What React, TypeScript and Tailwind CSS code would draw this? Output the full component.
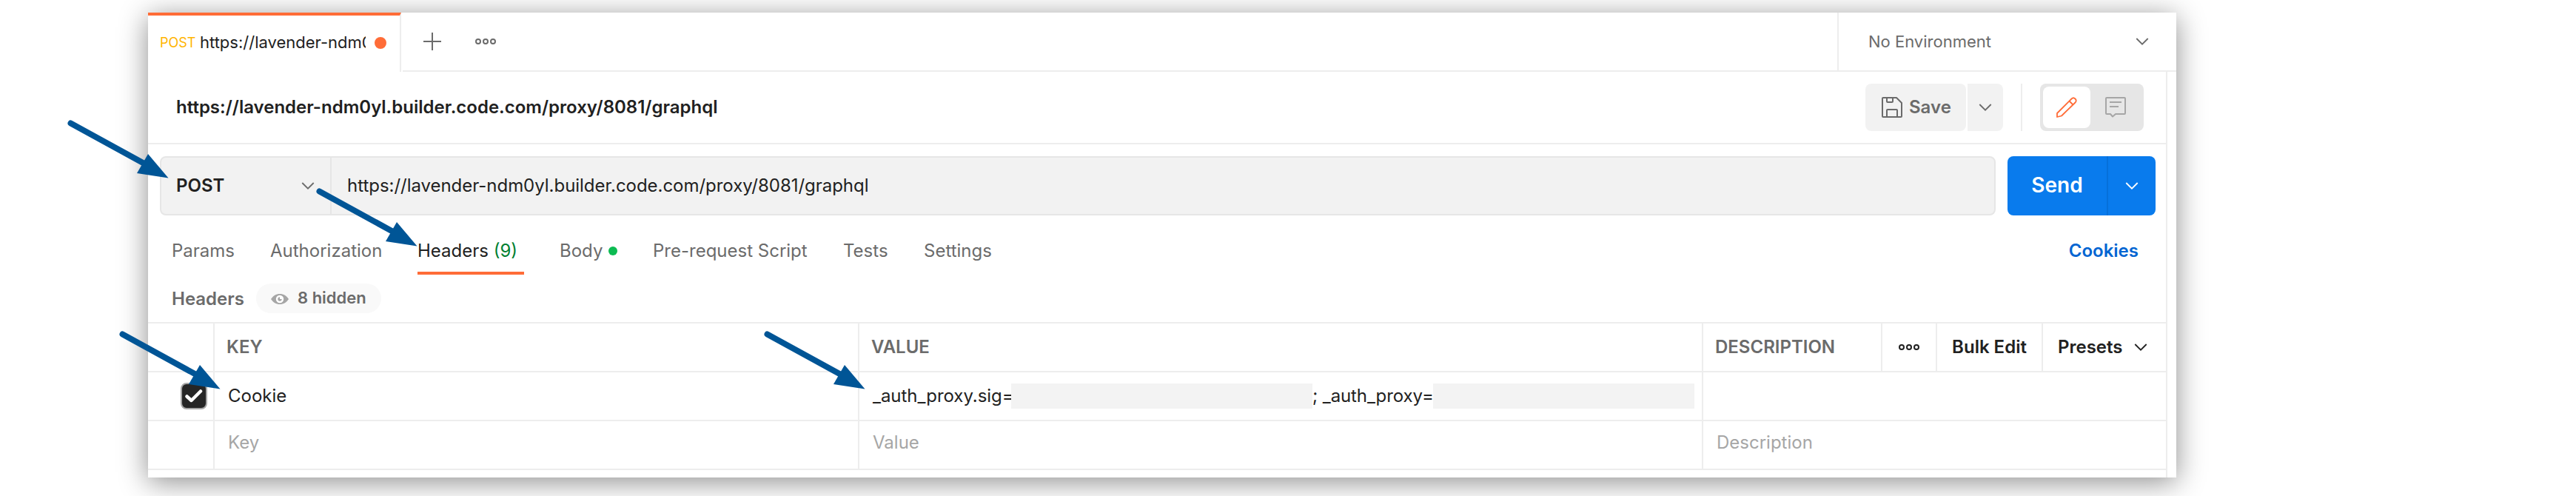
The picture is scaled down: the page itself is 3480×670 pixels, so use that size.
import React from "react";

function Chevron({ className = "" }: { className?: string }) {
  return (
    <svg viewBox="0 0 20 12" className={`h-3 w-5 shrink-0 ${className}`} fill="none" stroke="currentColor" strokeWidth="1.8">
      <path d="M2.300 2 10 9.700 17.700 2" />
    </svg>
  );
}

function Dots({ className = "" }: { className?: string }) {
  return (
    <svg viewBox="0 0 28 10" className={`h-2.5 w-7 shrink-0 ${className}`} fill="none" stroke="currentColor" strokeWidth="2">
      <circle cx="4" cy="5" r="3" />
      <circle cx="14" cy="5" r="3" />
      <circle cx="24" cy="5" r="3" />
    </svg>
  );
}

function Arrow({ className }: { className: string }) {
  return (
    <svg viewBox="0 0 138 80" className={`absolute h-[80px] w-[138px] text-[#005596] ${className}`}>
      <path d="M4.500 4.500 104 59" stroke="currentColor" strokeWidth="8" strokeLinecap="round" />
      <path d="M136.500 78.500 109 46 94 72Z" fill="currentColor" />
    </svg>
  );
}

function Cell({ children, className = "" }: { children?: React.ReactNode; className?: string }) {
  return <div className={`flex items-center whitespace-nowrap ${className}`}>{children}</div>;
}

export default function App() {
  return (
    <div className="relative h-[670px] w-[3480px] overflow-hidden bg-white pl-[200px] pt-[17px] font-['Inter',sans-serif] text-2xl text-[#212121]">
      <div className="flex h-[628px] w-[2740px] flex-col bg-white shadow-[0_6px_36px_rgba(0,0,0,0.45)]">
        <div className="flex h-20 shrink-0">
          <div className="flex w-[342px] items-center border-r-2 border-t-4 border-r-[#ededed] border-t-[#ff6c37] pb-0.5 pl-4 whitespace-nowrap">
            <span className="w-[54px] text-lg text-[#ffb400]">POST</span>
            <span className="w-[224px] overflow-hidden text-[22px]">https://lavender-ndm0yl</span>
            <span className="ml-3 size-4 rounded-full bg-[#ff6c37]" />
          </div>
          <div className="ml-0.5 flex grow items-center border-b-2 border-[#ededed] pl-7 text-[#6b6b6b]">
            <svg viewBox="0 0 24 24" className="size-6" stroke="currentColor" strokeWidth="2">
              <path d="M12 0v24M0 12h24" />
            </svg>
            <Dots className="ml-[46px]" />
          </div>
          <div className="flex w-[458px] items-center justify-between border-b-2 border-l-2 border-[#ededed] pl-10 pr-9 text-[22px] text-[#6b6b6b]">
            <span className="pt-0.5">No Environment</span>
            <Chevron />
          </div>
        </div>
        <div className="flex grow">
          <div className="flex w-[2728px] flex-col border-r-2 border-[#ededed]">
            <div className="flex h-[98px] items-center border-b-2 border-[#ededed] pl-[38px] pr-[30px]">
              <span className="grow font-semibold">https://lavender-ndm0yl.builder.code.com/proxy/8081/graphql</span>
              <div className="flex h-16 gap-0.5 font-semibold text-[#6b6b6b]">
                <div className="flex w-[136px] items-center rounded-lg bg-[#f2f2f2] pl-[22px]">
                  <svg viewBox="0 0 28 28" className="size-7" fill="none" stroke="currentColor" strokeWidth="2" strokeLinejoin="round">
                    <path d="M2 1h18l7 7v18a1 1 0 0 1-1 1H2a1 1 0 0 1-1-1V2a1 1 0 0 1 1-1zM7 1v5a1 1 0 0 0 1 1h6a1 1 0 0 0 1-1V1M7 27V18a1 1 0 0 1 1-1h12a1 1 0 0 1 1 1v9" />
                  </svg>
                  <span className="ml-[9px]">Save</span>
                </div>
                <div className="flex w-12 items-center justify-center rounded-r-lg bg-[#f2f2f2]">
                  <Chevron />
                </div>
              </div>
              <div className="ml-6 h-16 w-0.5 bg-[#ededed]" />
              <div className="ml-6 flex h-16 w-[140px] rounded-lg bg-[#e6e6e6] p-1">
                <div className="flex w-16 items-center justify-center rounded-lg bg-white text-[#ff6c37]">
                  <svg viewBox="0 0 28 28" className="size-7" fill="none" stroke="currentColor" strokeWidth="1.8" strokeLinejoin="round">
                    <path d="M1 27V22L20.500 2.500Q23 0 25.500 2.500Q28 5 25.500 7.500L7 25.500ZM17.500 5.500 22.500 10.500" />
                  </svg>
                </div>
                <div className="flex grow items-center justify-center text-[#a6a6a6]">
                  <svg viewBox="0 0 28 28" className="size-7" fill="none" stroke="currentColor" strokeWidth="2" strokeLinejoin="round">
                    <path d="M2 1h24a1 1 0 0 1 1 1v20a1 1 0 0 1-1 1H14l-4 3.500L7 23H2a1 1 0 0 1-1-1V2a1 1 0 0 1 1-1zM6 7h16M6 13h12" />
                  </svg>
                </div>
              </div>
            </div>
            <div className="flex h-28 shrink-0 items-center gap-4 pl-4 pr-3.5">
              <div className="flex h-20 grow rounded-lg border-2 border-[#e6e6e6] bg-[#f2f2f2]">
                <div className="flex w-[230px] items-center justify-between border-r-2 border-[#e6e6e6] px-5">
                  <span className="font-semibold">POST</span>
                  <Chevron className="text-[#6b6b6b]" />
                </div>
                <span className="self-center pl-[21px] tracking-[-0.03px]">https://lavender-ndm0yl.builder.code.com/proxy/8081/graphql</span>
              </div>
              <div className="flex h-20 w-[200px] rounded-lg bg-[#097bed] font-semibold text-white">
                <div className="flex w-[136px] items-center justify-center border-r-2 border-[#0670da] text-[28px]">Send</div>
                <div className="flex grow items-center justify-center">
                  <Chevron />
                </div>
              </div>
            </div>
            <div className="flex h-16 items-stretch pl-8 pr-[37px] leading-[64px] whitespace-nowrap text-[#6b6b6b]">
              <span className="w-[133px]">Params</span>
              <span className="w-[199px]">Authorization</span>
              <span className="w-36 border-b-4 border-[#ff6c37] text-[#212121]">
                Headers <span className="text-[#007f31]">(9)</span>
              </span>
              <span className="ml-12 flex w-[126px] items-center">
                Body <span className="ml-2 size-3 rounded-full bg-[#0cbb52]" />
              </span>
              <span className="w-[257px]">Pre-request Script</span>
              <span className="w-[109px]">Tests</span>
              <span className="grow">Settings</span>
              <span className="font-semibold text-[#0265d2]">Cookies</span>
            </div>
            <div className="flex h-16 items-center pl-8 font-semibold text-[#6b6b6b]">
              <span className="w-[114px] pt-0.5">Headers</span>
              <div className="flex h-10 w-[169px] items-center rounded-[20px] bg-[#f9f9f9] pl-5 text-[22px]">
                <svg viewBox="0 0 24 14" className="mt-0.5 h-3.5 w-6 text-[#a6a6a6]" fill="currentColor">
                  <path d="M0 7C3 2.500 7 0 12 0s9 2.500 12 7c-3 4.500-7 7-12 7S3 11.500 0 7z" />
                  <circle cx="12" cy="7" r="5.200" fill="white" />
                  <circle cx="12" cy="7" r="2.700" />
                  <path d="M12 3.500h3V7h-3z" fill="white" />
                </svg>
                <span className="ml-3">8 hidden</span>
              </div>
            </div>
            <div className="grid h-[200px] shrink-0 grid-cols-[90px_871px_1140px_1fr] grid-rows-[66px_66px_66px] border-t-2 border-[#ededed]">
              <Cell className="border-b-2 border-r-2 border-[#ededed]" />
              <Cell className="border-b-2 border-r-2 border-[#ededed] pl-4 font-semibold text-[#6b6b6b]">KEY</Cell>
              <Cell className="border-b-2 border-r-2 border-[#ededed] pl-4 font-semibold text-[#6b6b6b]">VALUE</Cell>
              <div className="flex border-b-2 border-[#ededed] font-semibold">
                <Cell className="w-[242px] border-r-2 border-[#ededed] pl-4 text-[#6b6b6b]">DESCRIPTION</Cell>
                <Cell className="w-[74px] justify-center border-r-2 border-[#ededed]"><Dots /></Cell>
                <Cell className="w-[143px] justify-center border-r-2 border-[#ededed]">Bulk Edit</Cell>
                <Cell className="pl-5">Presets <Chevron className="ml-3.5" /></Cell>
              </div>
              <Cell className="border-b-2 border-r-2 border-[#ededed] pl-11">
                <div className="flex h-9 w-9 items-center justify-center rounded-lg border-2 border-[#a6a6a6] bg-[#262626]">
                  <svg viewBox="0 0 24 20" className="h-5 w-6" fill="none" stroke="white" strokeWidth="4.500" strokeLinecap="round" strokeLinejoin="round">
                    <path d="M2.500 10.500 8.500 16 21 3.500" />
                  </svg>
                </div>
              </Cell>
              <Cell className="border-b-2 border-r-2 border-[#ededed] pl-[18px]">Cookie</Cell>
              <Cell className="border-b-2 border-r-2 border-[#ededed] pl-[18px]">
                <span className="w-[187px] tracking-[-0.03px]">_auth_proxy.sig=</span>
                <span className="h-[34px] w-[407px] bg-[#f3f3f3]" />
                <span className="w-[163px] tracking-[-0.1px]">; _auth_proxy=</span>
                <span className="h-[34px] w-[353px] bg-[#f3f3f3]" />
              </Cell>
              <Cell className="border-b-2 border-[#ededed]" />
              <Cell className="border-b-2 border-r-2 border-[#ededed]" />
              <Cell className="border-b-2 border-r-2 border-[#ededed] pl-[18px] pb-1.5 text-[#a6a6a6]">Key</Cell>
              <Cell className="border-b-2 border-r-2 border-[#ededed] pl-[18px] pb-1.5 text-[#a6a6a6]">Value</Cell>
              <Cell className="border-b-2 border-[#ededed] pl-[18px] pb-1.5 text-[#a6a6a6]">Description</Cell>
            </div>
          </div>
        </div>
      </div>
      <Arrow className="left-[91px] top-[162px]" />
      <Arrow className="left-[427px] top-[254px]" />
      <Arrow className="left-[161px] top-[447px]" />
      <Arrow className="left-[1032px] top-[447px]" />
    </div>
  );
}
